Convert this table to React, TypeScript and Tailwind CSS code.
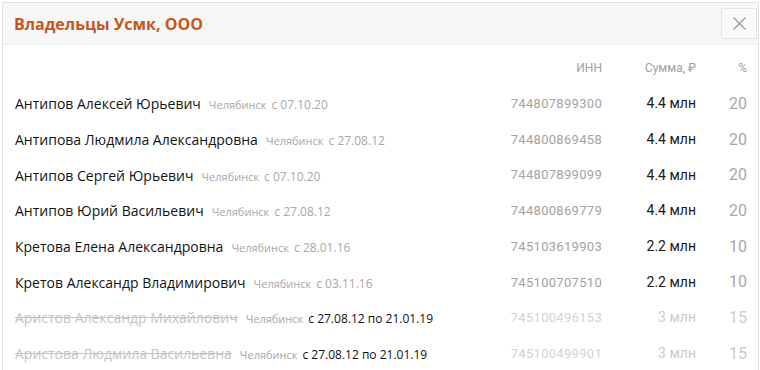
const rows = [
  { name: 'Антипов Алексей Юрьевич', date: 'с 07.10.20', inn: '744807899300', sum: '4.4 млн', pct: '20' },
  { name: 'Антипова Людмила Александровна', date: 'с 27.08.12', inn: '744800869458', sum: '4.4 млн', pct: '20' },
  { name: 'Антипов Сергей Юрьевич', date: 'с 07.10.20', inn: '744807899099', sum: '4.4 млн', pct: '20' },
  { name: 'Антипов Юрий Васильевич', date: 'с 27.08.12', inn: '744800869779', sum: '4.4 млн', pct: '20' },
  { name: 'Кретова Елена Александровна', date: 'с 28.01.16', inn: '745103619903', sum: '2.2 млн', pct: '10' },
  { name: 'Кретов Александр Владимирович', date: 'с 03.11.16', inn: '745100707510', sum: '2.2 млн', pct: '10' },
  { name: 'Аристов Александр Михайлович', date: 'с 27.08.12 по 21.01.19', inn: '745100496153', sum: '3 млн', pct: '15', former: true },
  { name: 'Аристова Людмила Васильевна', date: 'с 27.08.12 по 21.01.19', inn: '745100499901', sum: '3 млн', pct: '15', former: true },
];

export default function App() {
  return (
    <div className="h-[370px] w-[760px] overflow-hidden bg-white pl-[2px] pt-[2px]">
      <div className="h-[400px] w-[757px] border-l border-r border-t border-[#e2e2e2]">
        <div className="flex h-[42px] items-center justify-between border-b border-[#eeeeee] bg-[#f7f7f7] pl-[11px] pr-[1px]">
          <h1 className="font-['Open_Sans',sans-serif] text-[16px] font-bold text-[#c2581c]">Владельцы Усмк, ООО</h1>
          <button className="flex h-[31px] w-[36px] items-center justify-center border border-[#e6e6e6] bg-[#fafafa]">
            <svg width="15" height="15" viewBox="0 0 15 15" fill="none" stroke="#9a9a9a" strokeWidth="1.3">
              <path d="M1.5 1.5L13.5 13.5M13.5 1.5L1.5 13.5" />
            </svg>
          </button>
        </div>
        <div className="pl-[12px] pr-[11px] pt-[12px]">
          <div className="flex h-[22px] items-center font-['Roboto',sans-serif] text-[12px] text-[#a0a0a0]">
            <div className="flex-1" />
            <div className="w-[120px] text-right">ИНН</div>
            <div className="w-[94px] text-right">Сумма, ₽</div>
            <div className="w-[51px] text-right">%</div>
          </div>
          <div className="pt-[7px]">
            {rows.map((r) => (
              <div key={r.inn} className="flex h-[35.7px] items-center">
                <div className="flex flex-1 items-baseline gap-[8px] whitespace-nowrap">
                  <span
                    className={`font-['Open_Sans',sans-serif] text-[14px] ${
                      r.former ? 'text-[#c4c4c4] line-through' : 'text-[#141414]'
                    }`}
                  >
                    {r.name}
                  </span>
                  <span className="font-['Open_Sans',sans-serif] text-[11px] text-[#a8a8a8]">
                    Челябинск
                    <span className={`ml-[5px] text-[12px] ${r.former ? 'text-[#111]' : ''}`}>{r.date}</span>
                  </span>
                </div>
                <div
                  className={`w-[120px] text-right font-['Roboto',sans-serif] text-[13px] tracking-[0.3px] ${
                    r.former ? 'text-[#d2d2d2]' : 'text-[#a3a3a3]'
                  }`}
                >
                  {r.inn}
                </div>
                <div
                  className={`w-[94px] text-right font-['Roboto',sans-serif] text-[14px] ${
                    r.former ? 'text-[#cccccc]' : 'text-[#1a1a1a]'
                  }`}
                >
                  {r.sum}
                </div>
                <div
                  className={`w-[51px] text-right font-['Roboto',sans-serif] text-[16px] ${
                    r.former ? 'text-[#cccccc]' : 'text-[#a8a8a8]'
                  }`}
                >
                  {r.pct}
                </div>
              </div>
            ))}
          </div>
        </div>
      </div>
    </div>
  );
}
